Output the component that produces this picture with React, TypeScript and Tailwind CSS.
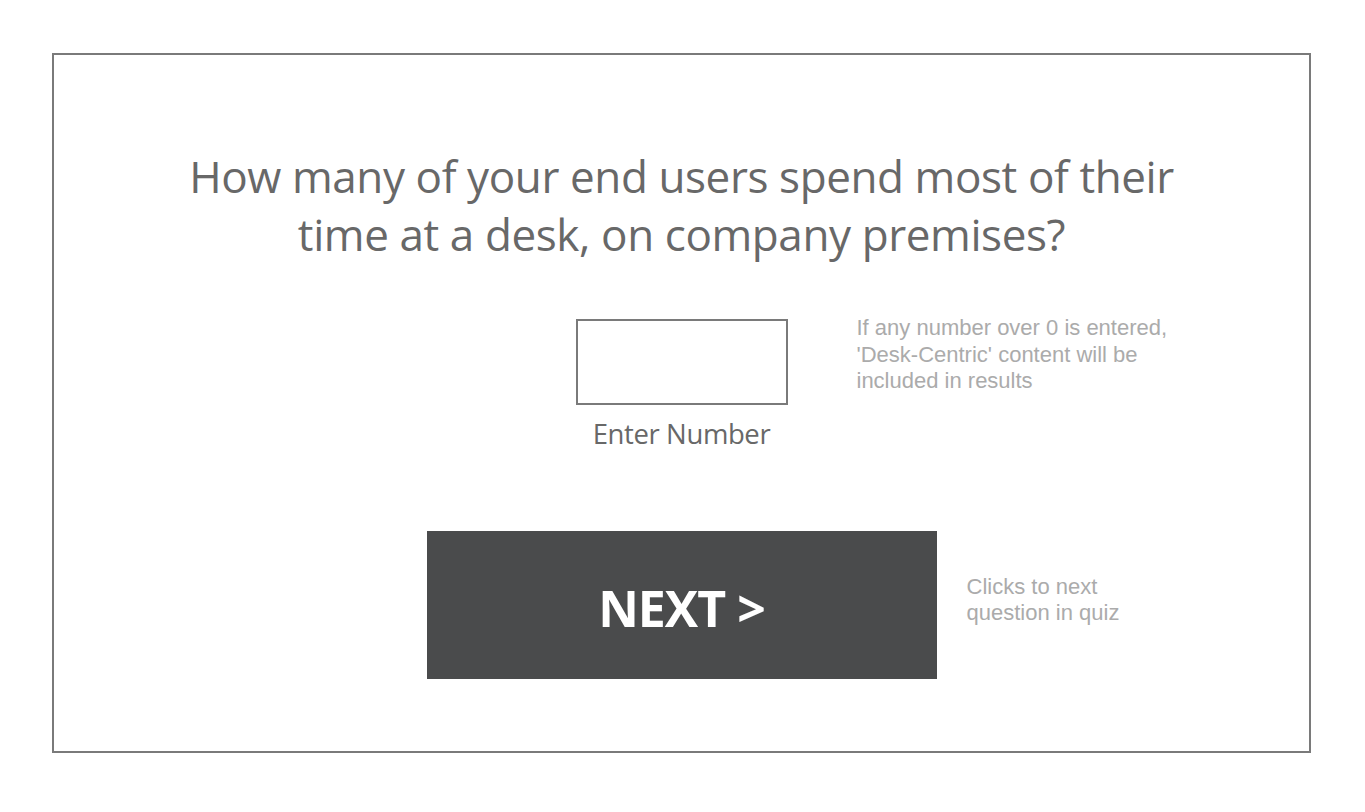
export default function App() {
  return (
    <div className="min-h-[812px] w-[1365px] bg-white pt-[53px] pl-[52px]">
      <div className="flex h-[700px] w-[1259px] flex-col items-center border-2 border-[#7a7a7a] pt-[92px]">
        <h1 className="text-center font-['Open_Sans',sans-serif] text-[44px] leading-[58px] font-normal tracking-[-0.4px] text-[#686868]">
          How many of your end users spend most of their
          <br />
          time at a desk, on company premises?
        </h1>

        <div className="mt-[56px] grid w-full grid-cols-[1fr_auto_1fr]">
          <div />
          <div className="flex flex-col items-center">
            <div className="h-[86px] w-[212px] border-2 border-[#7a7a7a]" />
            <span className="mt-[12px] font-['Open_Sans',sans-serif] text-[27.5px] leading-[34px] tracking-[-0.4px] text-[#686868]">
              Enter Number
            </span>
          </div>
          <p className="ml-[69px] mt-[-4px] font-['Liberation_Sans',sans-serif] text-[22px] leading-[26.5px] text-[#ababab]">
            If any number over 0 is entered,
            <br />
            'Desk-Centric' content will be
            <br />
            included in results
          </p>
        </div>

        <div className="mt-[80px] grid w-full grid-cols-[1fr_auto_1fr] items-center">
          <div />
          <button className="flex h-[148px] w-[510px] items-center justify-center bg-[#4a4b4c] pt-[6px] font-['Open_Sans',sans-serif] text-[50px] font-bold tracking-[-1px] text-white">
            NEXT &gt;
          </button>
          <p className="ml-[30px] mt-[-10px] font-['Liberation_Sans',sans-serif] text-[22px] leading-[26.5px] text-[#ababab]">
            Clicks to next
            <br />
            question in quiz
          </p>
        </div>
      </div>
    </div>
  );
}
